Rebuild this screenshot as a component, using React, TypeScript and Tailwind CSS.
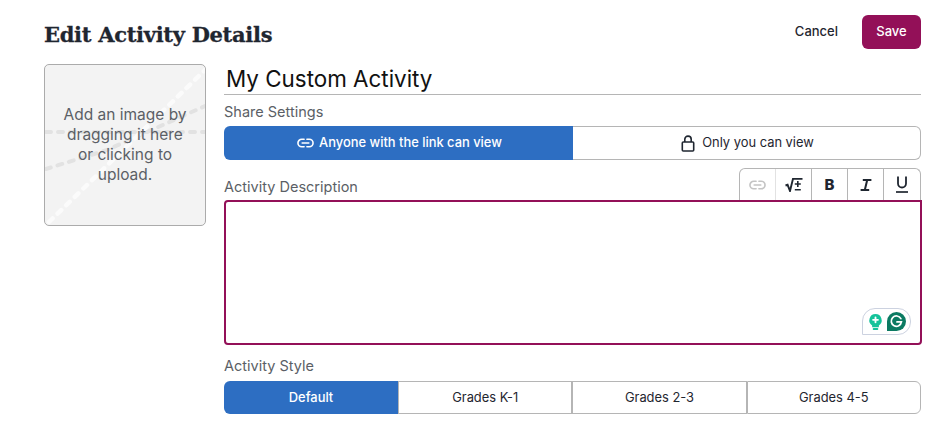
import React from "react";

const sans = "font-['Inter','Noto_Sans',sans-serif]";

function LinkIcon({ className }: { className?: string }) {
  return (
    <svg viewBox="0 0 18 12" className={className} fill="none" stroke="currentColor" strokeWidth="1.7" strokeLinecap="round">
      <path d="M7.5 2H5a4 4 0 0 0 0 8h2.5" />
      <path d="M10.5 2H13a4 4 0 0 1 0 8h-2.5" />
      <path d="M5.5 6h7" />
    </svg>
  );
}

function LockIcon() {
  return (
    <svg viewBox="0 0 14 17" className="w-[14px] h-[17px] text-[#1f2630]" fill="none" stroke="currentColor" strokeWidth="1.6">
      <rect x="1.3" y="7" width="11.4" height="9" rx="1" />
      <path d="M3.8 7V4.3a3.2 3.2 0 0 1 6.4 0V7" />
    </svg>
  );
}

function MathIcon() {
  return (
    <svg viewBox="0 0 18 14" className="w-[18px] h-[14px]" fill="none" stroke="currentColor">
      <path d="M0.5 7.5L2.6 6.8 5 13 8 0.8H17.5" strokeWidth="1.9" />
      <path d="M12.8 3v6M9.8 6h6M9.8 11.8h6" strokeWidth="1.6" />
    </svg>
  );
}

function ItalicIcon() {
  return (
    <svg viewBox="0 0 12 12" className="w-[12px] h-[12px]" fill="none" stroke="currentColor" strokeWidth="2">
      <path d="M2.8 1H11.4M0.6 11H9.2M7.2 1L4.8 11" />
    </svg>
  );
}

function UnderlineIcon() {
  return (
    <svg viewBox="0 0 12 17" className="w-[12px] h-[17px]" fill="none" stroke="currentColor">
      <path d="M2 0.5V7.5a4 4 0 0 0 8 0V0.5" strokeWidth="1.8" />
      <path d="M0 16H12" strokeWidth="1.7" />
    </svg>
  );
}

function ImageBackdrop() {
  return (
    <svg viewBox="0 0 160 160" className="absolute inset-0 w-full h-full" fill="none" strokeLinecap="round">
      <path d="M1 67H160" stroke="#e2e2e2" strokeWidth="4" strokeDasharray="5 7" />
      <path d="M1 104L62 85 160 41" stroke="#e2e2e2" strokeWidth="4" strokeDasharray="5 7" />
      <path d="M4 157L160 5" stroke="#fbfbfb" strokeWidth="4.5" strokeDasharray="5 7" />
    </svg>
  );
}

function Grammarly() {
  return (
    <div className="absolute right-[9px] bottom-[8px] w-[49px] h-[27px] bg-white border border-[#ccd2e0] rounded-tl-[13px] rounded-tr-[13px] rounded-br-[13px] flex items-center justify-center gap-[4px]">
      <svg viewBox="0 0 16 19" className="w-[15px] h-[18px]">
        <path d="M8 1a6.6 6.6 0 0 0-3.6 12.1V15h7.2v-1.9A6.6 6.6 0 0 0 8 1z" fill="#15c39a" />
        <rect x="5" y="16" width="6" height="2" rx="1" fill="#15c39a" />
        <path d="M8 4.6v5.2M5.4 7.2h5.2" stroke="#fff" strokeWidth="2" strokeLinecap="round" />
      </svg>
      <svg viewBox="0 0 20 20" className="w-[19px] h-[19px]">
        <path d="M10 0a10 10 0 0 1 0 20H0V10A10 10 0 0 1 10 0z" fill="#0b7a62" />
        <path d="M14.6 7a5.4 5.4 0 1 0 .6 3.4H10.5" fill="none" stroke="#fff" strokeWidth="1.8" strokeLinecap="round" />
      </svg>
    </div>
  );
}

function Label({ children }: { children: React.ReactNode }) {
  return <div className="text-[14.5px] leading-[20px] text-[#5b5f66]">{children}</div>;
}

function ToolCell({ children, divider = "border-[#b5b5b5]", last }: { children: React.ReactNode; divider?: string; last?: boolean }) {
  return (
    <div className={`w-[36px] h-full flex items-center justify-center text-[#1f2630] ${last ? "" : `border-r ${divider}`}`}>
      {children}
    </div>
  );
}

function StyleTab({ label, last }: { label: string; last?: boolean }) {
  return (
    <div
      className={`flex-1 flex items-center justify-center text-[12.9px] bg-white text-[#1f2630] border border-[#b5b5b5] ${last ? "rounded-r-[6px]" : ""}`}
    >
      {label}
    </div>
  );
}

export default function App() {
  return (
    <div className={`w-[948px] h-[425px] overflow-hidden bg-white pl-[44px] pr-[27px] pt-[15px] ${sans}`}>
      <header className="flex items-center justify-between h-[34px]">
        <h1 className="font-['DejaVu_Serif',serif] font-bold text-[21px] leading-[34px] tracking-[-0.3px] [-webkit-text-stroke:0.3px_#1f2630] text-[#1f2630] mt-[5px]">Edit Activity Details</h1>
        <div className="flex items-center">
          <button className="text-[13px] font-medium text-[#1f2630] mr-[24px]">Cancel</button>
          <button className="w-[59px] h-[34px] rounded-[6px] bg-[#931058] text-white text-[13px] font-medium">Save</button>
        </div>
      </header>

      <div className="flex gap-[18px] mt-[15px]">
        <div className="relative w-[162px] h-[162px] shrink-0 rounded-[5px] border border-[#ababab] bg-[#f3f3f3] overflow-hidden flex items-center justify-center">
          <ImageBackdrop />
          <p className="relative text-center text-[15.5px] leading-[20px] text-[#5b5f66] w-[128px]">
            Add an image by dragging it here or clicking to upload.
          </p>
        </div>

        <div className="flex-1 min-w-0">
          <div className="h-[31px] border-b border-[#b5b5b5] pl-[2px] text-[22.4px] leading-[29px] text-[#111]">My Custom Activity</div>

          <div className="mt-[7px]">
            <Label>Share Settings</Label>
          </div>
          <div className="flex h-[34px] mt-[4px]">
            <div className="w-[349px] pl-[2px] bg-[#2d6ec2] rounded-l-[6px] flex items-center justify-center gap-[5px] text-white text-[12.9px] font-medium">
              <LinkIcon className="w-[17px] h-[12px]" />
              Anyone with the link can view
            </div>
            <div className="flex-1 pl-[2px] bg-white border border-l-0 border-[#b5b5b5] rounded-r-[6px] flex items-center justify-center gap-[7px] text-[12.9px] text-[#1f2630]">
              <LockIcon />
              Only you can view
            </div>
          </div>

          <div className="flex items-end justify-between h-[32px] mt-[8px]">
            <div className="mb-[3px]">
              <Label>Activity Description</Label>
            </div>
            <div className="flex h-[32px] w-[182px] border border-b-0 border-[#b5b5b5] rounded-t-[6px] bg-white">
              <ToolCell divider="border-[#e2e2e2]">
                <LinkIcon className="w-[17px] h-[12px] text-[#c4c4c4]" />
              </ToolCell>
              <ToolCell>
                <MathIcon />
              </ToolCell>
              <ToolCell>
                <span className="text-[15px] font-extrabold leading-none">B</span>
              </ToolCell>
              <ToolCell>
                <ItalicIcon />
              </ToolCell>
              <ToolCell last>
                <UnderlineIcon />
              </ToolCell>
            </div>
          </div>

          <div className="relative h-[145px] w-[698px] border-2 border-[#931058] rounded-tl-[4px] rounded-b-[4px] bg-white">
            <Grammarly />
          </div>

          <div className="mt-[11px]">
            <Label>Activity Style</Label>
          </div>
          <div className="flex h-[33px] mt-[5px]">
            <div className="w-[174px] shrink-0 flex items-center justify-center bg-[#2d6ec2] rounded-l-[6px] text-white text-[12.9px] font-medium">Default</div>
            <StyleTab label="Grades K-1" />
            <StyleTab label="Grades 2-3" />
            <StyleTab label="Grades 4-5" last />
          </div>
        </div>
      </div>
    </div>
  );
}
